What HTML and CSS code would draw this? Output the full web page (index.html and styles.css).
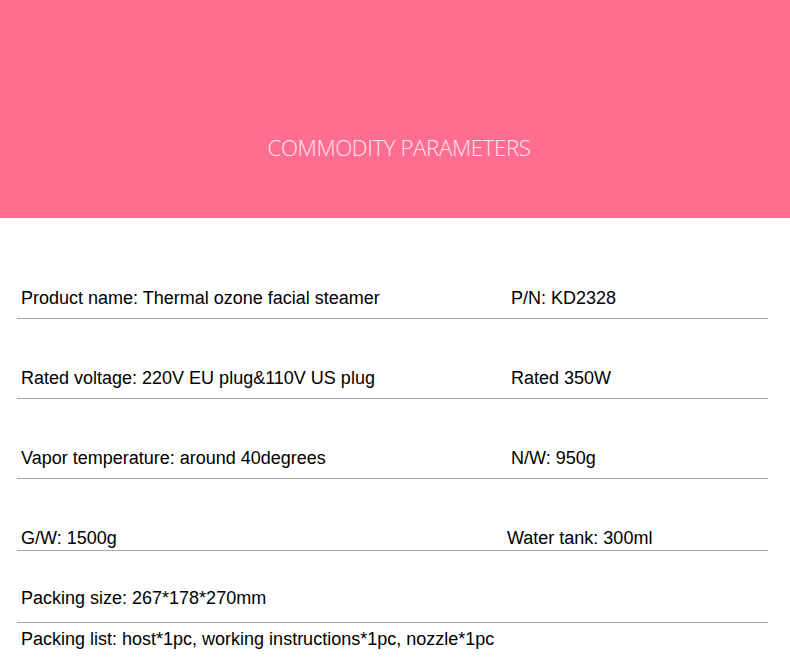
FILE: index.html
```html
<!DOCTYPE html>
<html>
<head>
<meta charset="utf-8">
<link rel="stylesheet" href="styles.css">
</head>
<body>
<header class="banner">
  <h1 class="banner-title">COMMODITY PARAMETERS</h1>
</header>
<section class="params">
  <div class="row row-1">
    <span class="cell cell-left">Product name: Thermal ozone facial steamer</span>
    <span class="cell cell-right">P/N: KD2328</span>
  </div>
  <div class="row row-2">
    <span class="cell cell-left">Rated voltage: 220V EU plug&amp;110V US plug</span>
    <span class="cell cell-right">Rated 350W</span>
  </div>
  <div class="row row-3">
    <span class="cell cell-left">Vapor temperature: around 40degrees</span>
    <span class="cell cell-right">N/W: 950g</span>
  </div>
  <div class="row row-4">
    <span class="cell cell-left">G/W: 1500g</span>
    <span class="cell cell-right cell-shift">Water tank: 300ml</span>
  </div>
  <div class="row row-5">
    <span class="cell cell-left">Packing size: 267*178*270mm</span>
  </div>
  <div class="row row-6">
    <span class="cell cell-left">Packing list: host*1pc, working instructions*1pc, nozzle*1pc</span>
  </div>
</section>
</body>
</html>
```

FILE: styles.css
```css
html, body {
  margin: 0;
  padding: 0;
  background: #ffffff;
}

body {
  width: 790px;
  font-family: "Liberation Sans", Arial, sans-serif;
  color: #000000;
}

.banner {
  height: 218px;
  background: #ff6d91;
  display: flex;
  justify-content: center;
  align-items: flex-start;
  box-sizing: border-box;
  padding-top: 134px;
}

.banner-title {
  margin: 0;
  font-family: "Open Sans", sans-serif;
  font-weight: 300;
  font-size: 22.3px;
  line-height: 28px;
  letter-spacing: -0.4px;
  color: #ffe8ee;
  padding-left: 8px;
}

.params {
  margin-left: 17px;
  width: 751px;
}

.row {
  display: flex;
  align-items: flex-end;
  box-sizing: border-box;
  border-bottom: 1px solid #aaaaaa;
  font-size: 18px;
  line-height: 20px;
}

.cell-left {
  width: 490px;
  padding-left: 4px;
  flex: none;
}

.cell-right {
  flex: 1;
}

.cell-shift {
  margin-left: -4px;
}

.row-1 { height: 101px; padding-bottom: 10px; }
.row-2 { height: 80px; padding-bottom: 10px; }
.row-3 { height: 80px; padding-bottom: 10px; }
.row-4 { height: 72px; padding-bottom: 2px; }
.row-5 { height: 72px; padding-bottom: 14px; }
.row-6 {
  border-bottom: none;
  align-items: flex-start;
  padding-top: 6px;
}
```
